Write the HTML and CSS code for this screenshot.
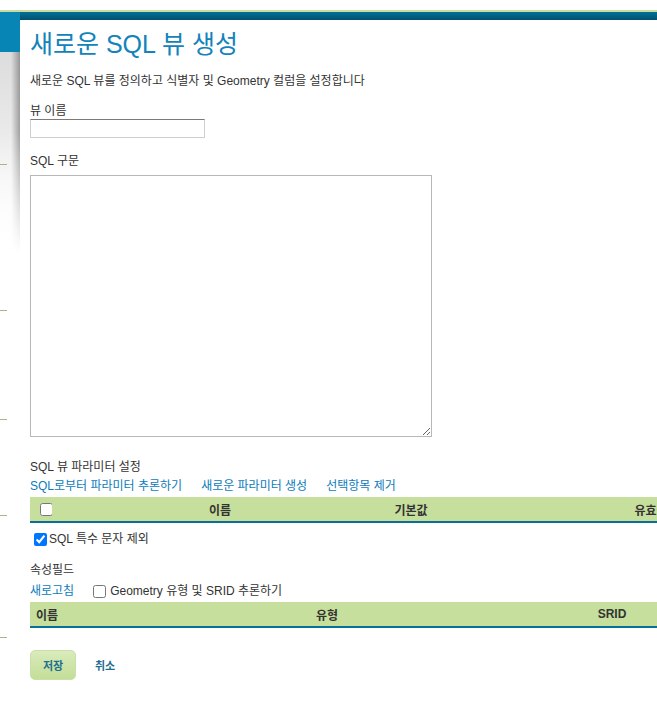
FILE: index.html
```html
<!DOCTYPE html>
<html lang="ko">

<head>
    <meta charset="UTF-8">
    <meta name="viewport" content="width=device-width, initial-scale=1.0">
    <title>새로운 SQL 뷰 생성</title>
    <link rel="stylesheet" href="styles.css">
</head>

<body>

    <!-- Top accent and header band -->
    <div class="top-space"></div>
    <div class="accent"></div>
    <div class="band"></div>

    <div class="layout">
        <!-- Collapsed side menu -->
        <div class="sidebar">
            <div class="menu-mark mark-1"></div>
            <div class="menu-mark mark-2"></div>
            <div class="menu-mark mark-3"></div>
            <div class="menu-mark mark-4"></div>
            <div class="menu-mark mark-5"></div>
        </div>

        <!-- Main panel -->
        <div class="panel">
            <h1 class="page-title">새로운 SQL 뷰 생성</h1>
            <p class="description">새로운 SQL 뷰를 정의하고 식별자 및 Geometry 컬럼을 설정합니다</p>

            <label class="field-label" for="viewName">뷰 이름</label>
            <input type="text" id="viewName" class="name-input">

            <label class="field-label sql-label" for="sqlText">SQL 구문</label>
            <textarea id="sqlText" class="sql-input"></textarea>

            <!-- Parameters -->
            <div class="section-title">SQL 뷰 파라미터 설정</div>
            <div class="link-row">
                <a href="#">SQL로부터 파라미터 추론하기</a>
                <a href="#">새로운 파라미터 생성</a>
                <a href="#">선택항목 제거</a>
            </div>
            <table class="grid param-grid">
                <colgroup>
                    <col class="c-check">
                    <col class="c-name">
                    <col class="c-default">
                    <col class="c-valid">
                </colgroup>
                <thead>
                    <tr>
                        <th><input type="checkbox" class="head-check"></th>
                        <th>이름</th>
                        <th>기본값</th>
                        <th>유효성 검사 정규식</th>
                    </tr>
                </thead>
            </table>
            <div class="check-row">
                <label><input type="checkbox" checked>SQL 특수 문자 제외</label>
            </div>

            <!-- Attributes -->
            <div class="section-title attr-title">속성필드</div>
            <div class="link-row tight">
                <a href="#">새로고침</a>
                <label class="inline-check"><input type="checkbox">Geometry 유형 및 SRID 추론하기</label>
            </div>
            <table class="grid attr-grid">
                <colgroup>
                    <col class="a-name">
                    <col class="a-type">
                    <col class="a-srid">
                    <col class="a-id">
                </colgroup>
                <thead>
                    <tr>
                        <th class="left">이름</th>
                        <th>유형</th>
                        <th>SRID</th>
                        <th>식별자</th>
                    </tr>
                </thead>
            </table>

            <div class="buttons">
                <button class="save-btn">저장</button>
                <a href="#" class="cancel-link">취소</a>
            </div>
        </div>
    </div>

</body>

</html>
```

FILE: styles.css
```css
/* General Reset */
* {
    margin: 0;
    padding: 0;
    box-sizing: border-box;
}

body {
    font-family: "Liberation Sans", "Noto Sans CJK KR", sans-serif;
    font-size: 12px;
    color: #333;
    background-color: white;
    overflow: hidden;
}

/* Header */
.top-space {
    height: 10px;
}

.accent {
    height: 2px;
    background-color: #c8dc9e;
}

.band {
    height: 8px;
    background:
        linear-gradient(to right, #0786b6 20px, transparent 20px),
        linear-gradient(#00709a, #00516b);
}

/* Page layout */
.layout {
    display: grid;
    grid-template-columns: 20px 1fr;
    min-height: 720px;
}

.sidebar {
    display: flex;
    flex-direction: column;
    background:
        linear-gradient(#0786b6 32px, transparent 32px),
        linear-gradient(rgba(255, 255, 255, 0) 40%, #fff 100%) 0 32px / 20px 200px no-repeat,
        linear-gradient(to right, transparent 11px, rgba(0, 0, 0, 0.32) 20px) 0 32px / 20px 200px no-repeat,
        linear-gradient(#dcdcdc 32px, #fff 232px);
}

.menu-mark {
    width: 7px;
    height: 1px;
    background-color: #a8b48e;
}

.mark-1 { margin-top: 144px; }
.mark-2 { margin-top: 145px; }
.mark-3 { margin-top: 108px; }
.mark-4 { margin-top: 95px; }
.mark-5 { margin-top: 121px; }

.panel {
    background-color: white;
    border-top-left-radius: 10px;
    padding: 9px 0 0 10px;
    overflow: hidden;
}

/* Texts */
.page-title {
    font-size: 25px;
    font-weight: normal;
    line-height: 30px;
    color: #1283bb;
    white-space: nowrap;
}

.description {
    margin-top: 14px;
    line-height: 16px;
}

.field-label {
    display: block;
    margin-top: 14px;
    line-height: 16px;
}

.sql-label {
    margin-top: 15px;
}

.name-input {
    display: block;
    margin-top: 0;
    width: 175px;
    height: 19px;
    border: 1px solid #cfcfcf;
    border-top-color: #7a7a7a;
}

.sql-input {
    display: block;
    margin-top: 6px;
    width: 402px;
    height: 262px;
    border: 1px solid #b8b8b8;
    resize: both;
}

.section-title {
    margin-top: 22px;
    line-height: 16px;
}

.attr-title {
    margin-top: 15px;
}

.link-row {
    display: flex;
    align-items: center;
    gap: 19px;
    margin-top: 3px;
    line-height: 16px;
    white-space: nowrap;
}

.link-row.tight {
    margin-top: 5px;
}

.link-row a {
    color: #0b7bbb;
    text-decoration: none;
}

.inline-check {
    display: flex;
    align-items: center;
}

.inline-check input {
    margin: 0 4px 0 0;
    width: 13px;
    height: 13px;
}

/* Header grids */
.grid {
    margin-top: 3px;
    border-collapse: collapse;
    table-layout: fixed;
    white-space: nowrap;
}

.grid th {
    height: 25px;
    background-color: #c6df9c;
    border-bottom: 2px solid #0a6f98;
    font-weight: bold;
    color: #333;
    text-align: center;
    padding: 0;
}

.grid th.left {
    text-align: left;
    padding-left: 6px;
}

.param-grid {
    width: 900px;
}

.c-check { width: 22px; }
.c-name { width: 336px; }
.c-default { width: 46px; }
.c-valid { width: 496px; }

.head-check {
    display: block;
    margin: 0 0 0 10px;
    width: 13px;
    height: 13px;
}

.attr-grid {
    width: 900px;
}

.a-name { width: 170px; }
.a-type { width: 254px; }
.a-srid { width: 316px; }
.a-id { width: 160px; }

.check-row {
    margin-top: 8px;
    line-height: 16px;
}

.check-row label {
    display: flex;
    align-items: center;
}

.check-row input {
    margin: 0 2px 0 4px;
    width: 13px;
    height: 13px;
}

/* Buttons */
.buttons {
    display: flex;
    align-items: center;
    gap: 19px;
    margin-top: 22px;
}

.save-btn {
    width: 46px;
    height: 30px;
    border: 1px solid #c9dfa8;
    border-radius: 5px;
    background: linear-gradient(#d9ebbb, #c3de97);
    font-family: inherit;
    font-size: 11px;
    font-weight: bold;
    color: #1f6f91;
}

.cancel-link {
    font-size: 11px;
    font-weight: bold;
    color: #1f6f91;
    text-decoration: none;
}
```
